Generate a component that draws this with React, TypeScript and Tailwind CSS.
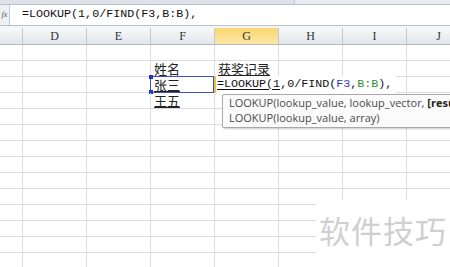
import React from "react";

const cols = ["D", "E", "F", "G", "H", "I", "J"];
const mono = { fontFamily: '"Liberation Mono", "Noto Sans CJK SC", monospace' } as const;
const cjk = { fontFamily: '"Noto Sans CJK SC", "Liberation Sans", sans-serif' } as const;

const Cell: React.FC<{ w?: string; children?: React.ReactNode; className?: string }> = ({ w = "w-[64px]", children, className = "" }) => (
  <div className={`${w} h-[16px] shrink-0 border-r border-b border-[#dadcdd] relative ${className}`}>{children}</div>
);

export default function App() {
  const rows = Array.from({ length: 14 }, (_, i) => i);

  return (
    <div className="w-[450px] h-[267px] overflow-hidden bg-white relative">
      {/* ribbon edge */}
      <div className="h-[4px] flex bg-[#dfe3e9]">
        <div className="w-[295px] border-r border-[#c5cbd3]" />
        <div className="flex-1 bg-[#e9ecf0]" />
      </div>
      {/* formula bar */}
      <div className="h-[22px] flex items-center border-y border-[#b9c0c9] bg-white">
        <div className="w-[10px] h-full flex items-center justify-center border-r border-[#c5cbd3] bg-[#eef1f4] text-[8px] italic text-[#555]" style={{ fontFamily: '"Liberation Serif", serif' }}>
          fx
        </div>
        <div className="pl-[12px] text-[11.7px] text-[#111]" style={mono}>
          =LOOKUP(1,0/FIND(F3,B:B),
        </div>
      </div>
      <div className="h-[2px] bg-[#f4f5f7]" />
      {/* column headers */}
      <div className="flex h-[17px] border-b border-[#b3b9c2]">
        <div className="w-[23px] shrink-0 border-r border-[#c2c8d0] bg-gradient-to-b from-[#f7f8fa] to-[#e2e6eb]" />
        {cols.map((c) => (
          <div
            key={c}
            className={`w-[64px] shrink-0 border-r border-[#c2c8d0] flex items-center justify-center text-[12px] text-[#333] ${
              c === "G" ? "bg-gradient-to-b from-[#f9d66f] to-[#fbe7a6]" : "bg-gradient-to-b from-[#f7f8fa] to-[#e2e6eb]"
            }`}
            style={{ fontFamily: '"Liberation Serif", serif' }}
          >
            {c}
          </div>
        ))}
      </div>
      {/* grid */}
      {rows.map((r) => (
        <div key={r} className="flex">
          <Cell w="w-[23px]" />
          <Cell />
          <Cell />
          <Cell>
            {r === 1 && <span className="absolute left-[3px] top-0 text-[13px] leading-[15px] text-[#222]" style={cjk}>姓名</span>}
            {r === 2 && (
              <>
                <span className="absolute left-[3px] top-0 text-[13px] leading-[15px] text-[#222] underline underline-offset-1" style={cjk}>张三</span>
                <div className="absolute -left-[1px] -top-[1px] w-[64px] h-[17px] border-[1.5px] border-[#3c4fcf]" />
                <div className="absolute -left-[2px] -top-[2px] w-[4px] h-[4px] bg-[#2233cc]" />
                <div className="absolute -left-[2px] top-[13px] w-[4px] h-[4px] bg-[#2233cc]" />
              </>
            )}
            {r === 3 && <span className="absolute left-[3px] top-0 text-[13px] leading-[15px] text-[#222] underline underline-offset-1" style={cjk}>王五</span>}
          </Cell>
          <Cell>
            {r === 1 && (
              <span className="absolute left-[3px] top-0 pr-[6px] text-[13px] leading-[15px] text-[#222] underline underline-offset-1 whitespace-nowrap" style={cjk}>
                获奖记录
              </span>
            )}
            {r === 2 && (
              <div className="absolute -left-[1px] -top-[1px] h-[17px] z-10 flex items-center bg-white border-l-2 border-[#e8c43a] pl-[1px] pr-[4px] whitespace-nowrap text-[11.7px] text-[#111]" style={mono}>
                <span className="underline underline-offset-2">=LOOKUP(1</span>
                <span>,0/FIND(</span>
                <span className="text-[#3434c8]">F3</span>
                <span>,</span>
                <span className="text-[#2e8f2e]">B:B</span>
                <span>),</span>
              </div>
            )}
          </Cell>
          <Cell />
          <Cell />
          <Cell w="w-[64px]" />
        </div>
      ))}
      {/* function tooltip */}
      <div
        className="absolute left-[222px] top-[94px] w-[240px] h-[34px] z-20 rounded-[2px] border border-[#a9a9a9] bg-[#fbfbfb] shadow-[1px_1px_2px_rgba(0,0,0,0.2)] pl-[6px] text-[11px] leading-[15px] text-[#4a4a4a] whitespace-nowrap"
        style={{ fontFamily: '"Open Sans", "Liberation Sans", sans-serif' }}
      >
        <div>
          LOOKUP(lookup_value, lookup_vector, <span className="font-bold text-[#222]">[result_vector])</span>
        </div>
        <div>LOOKUP(lookup_value, array)</div>
      </div>
      {/* watermark */}
      <div className="absolute left-[316px] top-[200px] w-[134px] h-[67px] bg-white flex items-start pt-[14px] pl-[3px]">
        <span className="text-[31px] leading-none text-[#cfcfcf] tracking-[1px]" style={cjk}>
          软件技巧
        </span>
      </div>
    </div>
  );
}
